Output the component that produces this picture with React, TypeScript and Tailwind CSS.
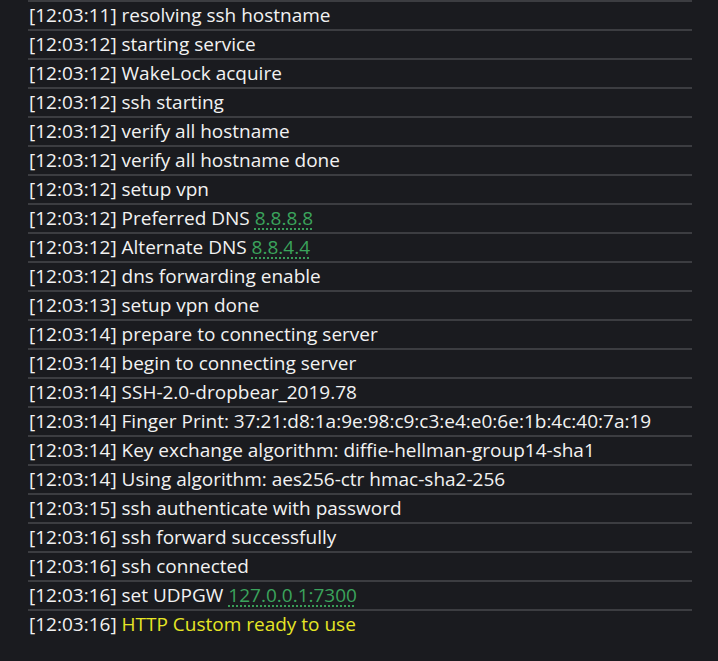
import React from "react";

type Seg = { t: string; c?: "link" | "yellow" };
type Row = { time: string; segs: Seg[] };

const rows: Row[] = [
  { time: "12:03:11", segs: [{ t: "resolving ssh hostname" }] },
  { time: "12:03:12", segs: [{ t: "starting service" }] },
  { time: "12:03:12", segs: [{ t: "WakeLock acquire" }] },
  { time: "12:03:12", segs: [{ t: "ssh starting" }] },
  { time: "12:03:12", segs: [{ t: "verify all hostname" }] },
  { time: "12:03:12", segs: [{ t: "verify all hostname done" }] },
  { time: "12:03:12", segs: [{ t: "setup vpn" }] },
  { time: "12:03:12", segs: [{ t: "Preferred DNS " }, { t: "8.8.8.8", c: "link" }] },
  { time: "12:03:12", segs: [{ t: "Alternate DNS " }, { t: "8.8.4.4", c: "link" }] },
  { time: "12:03:12", segs: [{ t: "dns forwarding enable" }] },
  { time: "12:03:13", segs: [{ t: "setup vpn done" }] },
  { time: "12:03:14", segs: [{ t: "prepare to connecting server" }] },
  { time: "12:03:14", segs: [{ t: "begin to connecting server" }] },
  { time: "12:03:14", segs: [{ t: "SSH-2.0-dropbear_2019.78" }] },
  { time: "12:03:14", segs: [{ t: "Finger Print: 37:21:d8:1a:9e:98:c9:c3:e4:e0:6e:1b:4c:40:7a:19" }] },
  { time: "12:03:14", segs: [{ t: "Key exchange algorithm: diffie-hellman-group14-sha1" }] },
  { time: "12:03:14", segs: [{ t: "Using algorithm: aes256-ctr hmac-sha2-256" }] },
  { time: "12:03:15", segs: [{ t: "ssh authenticate with password" }] },
  { time: "12:03:16", segs: [{ t: "ssh forward successfully" }] },
  { time: "12:03:16", segs: [{ t: "ssh connected" }] },
  { time: "12:03:16", segs: [{ t: "set UDPGW " }, { t: "127.0.0.1:7300", c: "link" }] },
  { time: "12:03:16", segs: [{ t: "HTTP Custom ready to use", c: "yellow" }] },
];

export default function App() {
  return (
    <div
      className="min-h-[661px] w-full bg-[#1a1b1f] text-[#f2f2f2]"
      style={{ fontFamily: "'Open Sans', 'Noto Sans', sans-serif" }}
    >
      <div className="ml-[28px] w-[664px]">
        {rows.map((r, i) => (
          <div
            key={i}
            className="h-[29px] border-t-2 border-[#3c3d41] pl-[1px] text-[19px] leading-[27px] whitespace-nowrap"
          >
            <span>[{r.time}] </span>
            {r.segs.map((s, j) =>
              s.c === "link" ? (
                <span
                  key={j}
                  className="text-[#3ba35c] underline decoration-dotted decoration-[#3ba35c] underline-offset-4"
                >
                  {s.t}
                </span>
              ) : s.c === "yellow" ? (
                <span key={j} className="text-[#e6e625]">
                  {s.t}
                </span>
              ) : (
                <span key={j}>{s.t}</span>
              )
            )}
          </div>
        ))}
      </div>
    </div>
  );
}
